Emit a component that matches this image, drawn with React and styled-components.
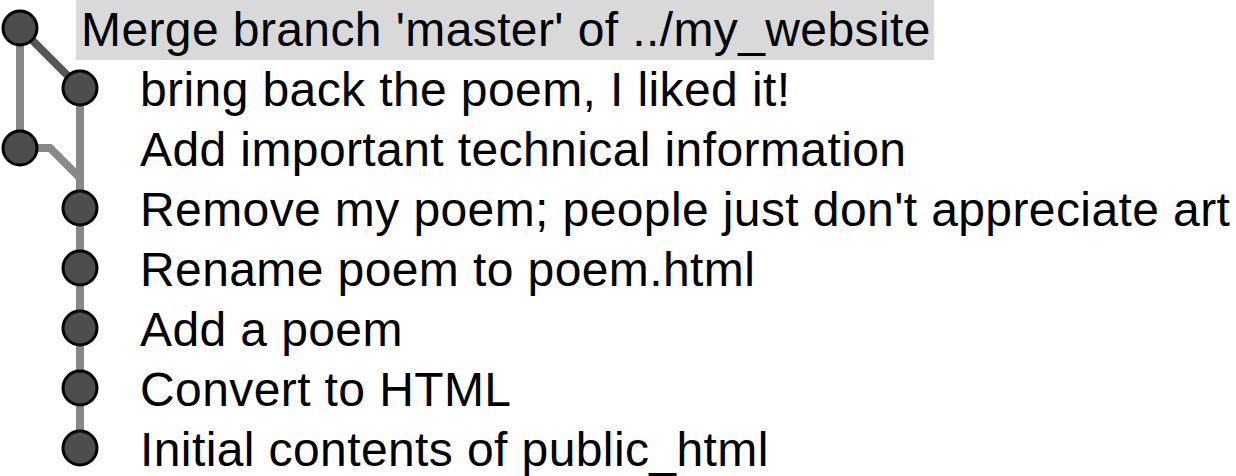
import React from 'react';
import styled, { createGlobalStyle } from 'styled-components';

const GlobalStyle = createGlobalStyle`
  html, body {
    margin: 0;
    padding: 0;
    background: #ffffff;
  }
`;

const commits = [
  { id: 1, title: "Merge branch 'master' of ../my_website", indent: 76, selected: true },
  { id: 2, title: 'bring back the poem, I liked it!', indent: 135 },
  { id: 3, title: 'Add important technical information', indent: 135 },
  { id: 4, title: "Remove my poem; people just don't appreciate art", indent: 135 },
  { id: 5, title: 'Rename poem to poem.html', indent: 135 },
  { id: 6, title: 'Add a poem', indent: 135 },
  { id: 7, title: 'Convert to HTML', indent: 135 },
  { id: 8, title: 'Initial contents of public_html', indent: 135 },
];

// dot column for each row
const ROW_H = 60;
const dotX = [20, 80, 20, 80, 80, 80, 80, 80];

const HistoryView = styled.div`
  display: grid;
  width: 1236px;
  height: 476px;
  overflow: hidden;
  font-family: 'Liberation Sans', Arial, sans-serif;
`;

const GraphLayer = styled.svg`
  grid-area: 1 / 1;
  align-self: start;
  z-index: 1;
`;

const CommitList = styled.ul`
  grid-area: 1 / 1;
  list-style: none;
  margin: 0;
  padding: 0;
`;

const CommitRow = styled.li`
  height: ${ROW_H}px;
  padding-left: ${(p) => p.$indent}px;
  display: flex;
  align-items: center;
`;

const CommitTitle = styled.span`
  font-size: 48px;
  line-height: ${ROW_H}px;
  letter-spacing: 0.4px;
  color: #000;
  white-space: nowrap;
  padding: 0 3px 0 5px;
  background: ${(p) => (p.$selected ? '#d9d9d9' : 'transparent')};
`;

const CommitGraph = () => (
  <GraphLayer width="100" height="476" viewBox="0 0 100 476">
    <g fill="none" strokeWidth="8">
      <line x1="20" y1="28" x2="20" y2="148" stroke="#888888" />
      <polyline points="20,148 50,148 80,178" stroke="#888888" />
      <line x1="80" y1="88" x2="80" y2="448" stroke="#888888" />
      <line x1="20" y1="28" x2="80" y2="88" stroke="#555555" />
    </g>
    {dotX.map((x, i) => (
      <circle
        key={i}
        cx={x}
        cy={28 + i * ROW_H}
        r="17"
        fill="#4d4d4d"
        stroke="#000"
        strokeWidth="3"
      />
    ))}
  </GraphLayer>
);

export default function App() {
  return (
    <>
      <GlobalStyle />
      <HistoryView>
        <CommitList>
          {commits.map((c) => (
            <CommitRow key={c.id} $indent={c.indent}>
              <CommitTitle $selected={c.selected}>{c.title}</CommitTitle>
            </CommitRow>
          ))}
        </CommitList>
        <CommitGraph />
      </HistoryView>
    </>
  );
}
